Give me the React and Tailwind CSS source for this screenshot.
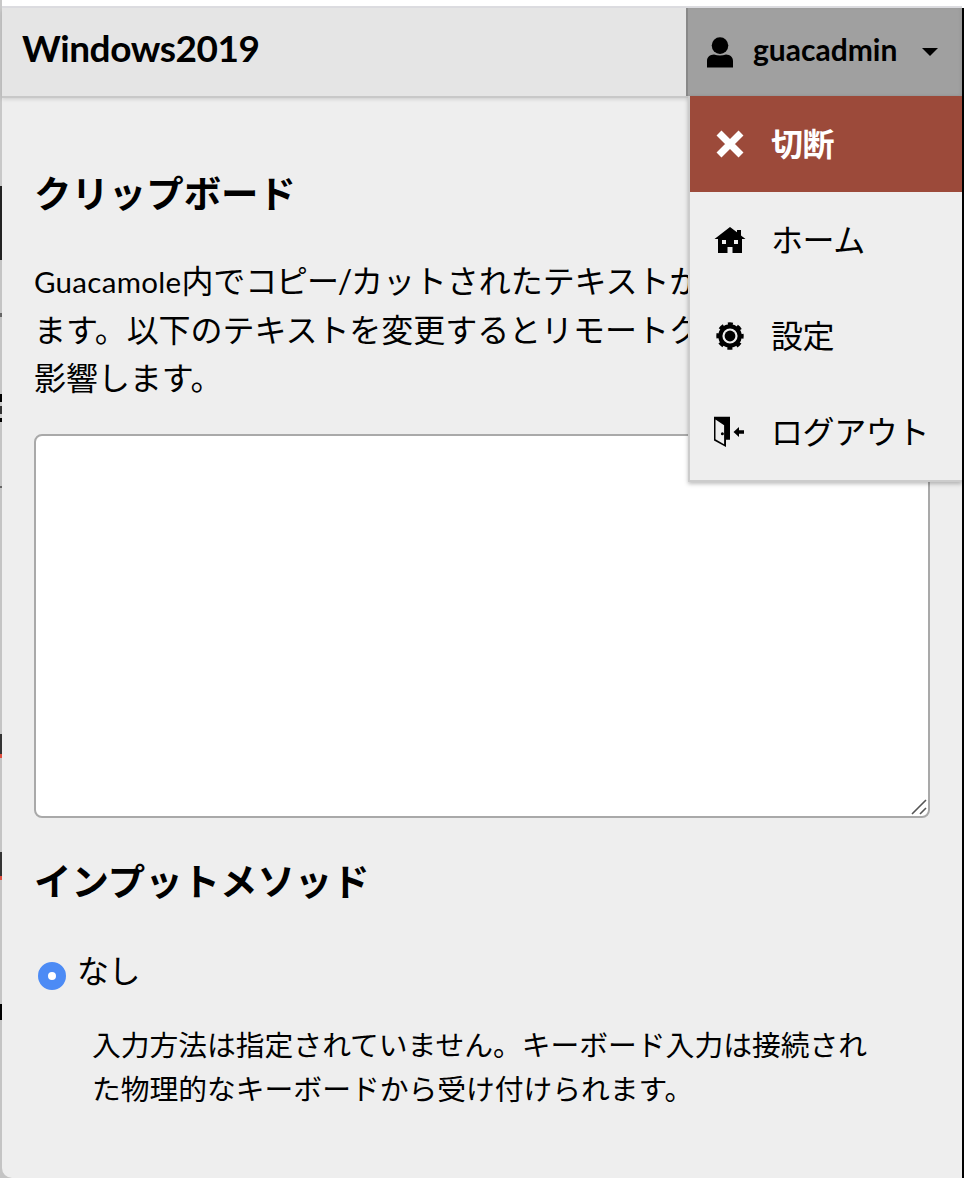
import React, { useState } from 'react';

const UserIcon = () => (
  <svg className="h-[31px] w-[26px] shrink-0" viewBox="0 0 26 31">
    <circle cx="13" cy="8.6" r="8.3" />
    <path d="M0 30.5v-6.5c0-4.2 3-6.4 7-6.6q6 2.2 12 0c4 .2 7 2.4 7 6.6v6.5z" />
  </svg>
);

const CloseIcon = () => (
  <svg className="h-8 w-8" viewBox="0 0 32 32">
    <path d="M5 5L27 27M27 5L5 27" stroke="white" strokeWidth="7" />
  </svg>
);

const HomeIcon = () => (
  <svg className="h-8 w-8" viewBox="0 0 32 32">
    <path fillRule="evenodd" d="M16 3L23 8.2V6h4v5.4L31.5 15H28v14h-9.5v-6h-5v6H4V15H.5zM8 16v4h4v-4zM20 16v4h4v-4z" />
  </svg>
);

const GearIcon = () => (
  <svg className="h-8 w-8" viewBox="0 0 32 32">
    <circle cx="16" cy="16" r="9.7" fill="none" stroke="black" strokeWidth="4.2" />
    <circle cx="16" cy="16" r="12.2" fill="none" stroke="black" strokeWidth="3" strokeDasharray="5 4.582" strokeDashoffset="2.5" />
    <circle cx="16" cy="16" r="5.4" />
  </svg>
);

const LogoutIcon = () => (
  <svg className="h-8 w-8" viewBox="0 0 32 32">
    <path fillRule="evenodd" d="M0 .7h16v23.1h-4V31L0 24.4zM1.5 3.4V23.2l8.6 5V9.2z" />
    <circle cx="8.4" cy="17.8" r="1.5" />
    <path d="M19.5 16l5.5-5v3.2h5v3.6h-5V21z" />
  </svg>
);

const menuItems = [
  { id: 'home', label: 'ホーム', Icon: HomeIcon },
  { id: 'settings', label: '設定', Icon: GearIcon },
  { id: 'logout', label: 'ログアウト', Icon: LogoutIcon },
];

const UserMenu = () => {
  const [open, setOpen] = useState(true);

  return (
    <div className="relative h-[88px] w-[276px] shrink-0">
      <button
        className="flex h-full w-full items-center border-l-2 border-[#888] bg-[#a0a0a0] pl-[19px] shadow-[inset_-2px_0_3px_rgba(0,0,0,0.05)]"
        onClick={() => setOpen((o) => !o)}
      >
        <UserIcon />
        <span className="-mt-[5px] ml-5 w-[145px] text-left text-[30px] font-bold">guacadmin</span>
        <svg className="ml-[24px] h-2 w-4 shrink-0" viewBox="0 0 16 8">
          <path d="M0 0h16L8 8z" />
        </svg>
      </button>
      {open && (
        <ul className="absolute top-[88px] left-[2px] z-10 w-[274px] border-b-2 border-l-2 border-[#ccc] bg-[#eee] shadow-[0_2px_4px_rgba(0,0,0,0.25)]">
          <li className="flex h-24 cursor-pointer items-center bg-[#9c4a3a] pl-6 text-white">
            <CloseIcon />
            <span className="ml-[25px] pb-px text-[32px] font-bold tracking-[-0.5px]">切断</span>
          </li>
          {menuItems.map(({ id, label, Icon }) => (
            <li key={id} className="flex h-24 cursor-pointer items-center pl-6">
              <Icon />
              <span className="ml-[25px] pb-px text-[32px] tracking-[-0.4px]">{label}</span>
            </li>
          ))}
        </ul>
      )}
    </div>
  );
};

// Slices of the desktop that stay visible left of the panel
const edgeMarks = [
  { h: 'h-[186px]', c: 'bg-[#c8c8c8]' },
  { h: 'h-[74px]', c: 'bg-[#222]' },
  { h: 'h-[53px]', c: 'bg-[#c4c4c4]' },
  { h: 'h-1', c: 'bg-[#666]' },
  { h: 'h-[77px]', c: 'bg-[#c4c4c4]' },
  { h: 'h-2', c: 'bg-black' },
  { h: 'h-1', c: 'bg-[#ccc]' },
  { h: 'h-2', c: 'bg-[#333]' },
  { h: 'h-1', c: 'bg-[#ccc]' },
  { h: 'h-1', c: 'bg-black' },
  { h: 'h-[64px]', c: 'bg-[#c4c4c4]' },
  { h: 'h-[2px]', c: 'bg-[#666]' },
  { h: 'h-[246px]', c: 'bg-[#c4c4c4]' },
  { h: 'h-[20px]', c: 'bg-[#333]' },
  { h: 'h-1', c: 'bg-[#e05040]' },
  { h: 'h-[94px]', c: 'bg-[#c4c4c4]' },
  { h: 'h-6', c: 'bg-[#333]' },
  { h: 'h-1', c: 'bg-[#e05040]' },
  { h: 'h-[124px]', c: 'bg-[#c4c4c4]' },
  { h: 'h-4', c: 'bg-black' },
  { h: 'h-[158px]', c: 'bg-[#c4c4c4]' },
];

const App = () => {
  const [clipboard, setClipboard] = useState('');
  const [inputMethod, setInputMethod] = useState('none');

  return (
    <div className="flex h-[1178px] w-[964px] overflow-hidden bg-[#c4c4c4] font-['Lato','Noto_Sans_CJK_JP',sans-serif] text-black">
      <div className="w-[2px] shrink-0">
        {edgeMarks.map((m, i) => <div key={i} className={`${m.h} ${m.c}`} />)}
      </div>
      <div className="flex w-[960px] shrink-0 flex-col rounded-bl-[10px] bg-[#eee]">
        <div className="h-[8px] shrink-0 border-b-2 border-[#dcdce0] bg-white" />

        {/* Header */}
        <header className="relative flex h-[88px] shrink-0 bg-[#e5e5e5] shadow-[0_2px_0_#c8c8c8,0_3px_4px_rgba(0,0,0,0.15)]">
          <h1 className="flex-1 pt-[17px] pl-5 text-[37px] leading-[46px] font-bold tracking-[-0.45px]">Windows2019</h1>
          <UserMenu />
        </header>

        <main className="px-8">
          {/* Clipboard */}
          <h3 className="mt-[69px] text-[37.44px] leading-[58px] font-bold">クリップボード</h3>
          <p className="mt-[34px] h-36 text-[32px] leading-[48px] tracking-[-0.05px] whitespace-nowrap">
            <span className="text-[29.5px] tracking-[0.3px]">Guacamole</span>内で<span className="tracking-[-1.2px]">コピー/</span>カットされたテキストが<br />
            ます。以下のテキストを変更するとリモートク<br />
            影響します。
          </p>
          <div className="relative mt-[33px] h-96">
            <textarea
              className="block h-full w-full resize-none rounded-[8px] border-2 border-[#a9a9a9] bg-white p-2 text-[29px] outline-none"
              value={clipboard}
              onChange={(e) => setClipboard(e.target.value)}
            />
            <svg className="pointer-events-none absolute right-[3px] bottom-[3px] h-4 w-4" viewBox="0 0 16 16" stroke="#555" strokeWidth="1.6">
              <path d="M1 15L15 1M9 15L15 9" />
            </svg>
          </div>

          {/* Input method */}
          <h3 className="mt-[35px] text-[37.44px] leading-[58px] font-bold">インプットメソッド</h3>
          <label className="mt-[36px] flex h-12 items-center pl-1">
            <input
              type="radio"
              className="mt-[10px] h-7 w-7 appearance-none rounded-full border-[10px] border-[#4c8bf5] bg-white"
              checked={inputMethod === 'none'}
              onChange={() => setInputMethod('none')}
            />
            <span className="ml-[11px] text-[32px] tracking-[-0.5px]">なし</span>
          </label>
          <p className="mt-[28px] ml-[58px] text-[28.8px] leading-[44px] tracking-[-0.03px] whitespace-nowrap">
            入力方法は指定されていません。キーボード入力は接続され<br />
            た物理的なキーボードから受け付けられます。
          </p>
        </main>
      </div>
      <div className="flex w-[2px] shrink-0 flex-col">
        <div className="h-[8px] shrink-0 bg-white" />
        <div className="flex-1 bg-black" />
      </div>
    </div>
  );
};

export default App;
